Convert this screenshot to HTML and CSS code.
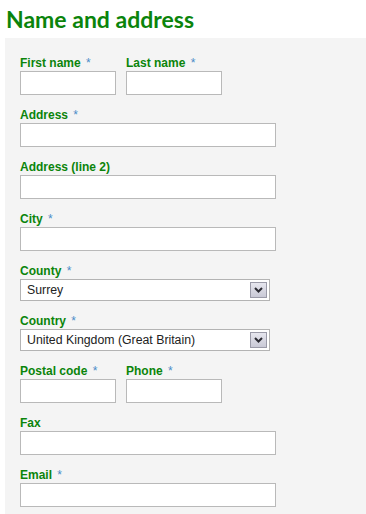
FILE: index.html
```html
<!DOCTYPE html>
<html lang="en">
<head>
    <meta charset="UTF-8">
    <meta name="viewport" content="width=device-width, initial-scale=1.0">
    <title>Name and address</title>
    <link rel="stylesheet" href="styles.css">
</head>
<body>

    <h1 class="page-title">Name and address</h1>

    <!-- Address form -->
    <form class="address-form">
        <div class="field-row">
            <div class="field">
                <label>First name <span class="req">*</span></label>
                <input type="text" class="input small">
            </div>
            <div class="field">
                <label>Last name <span class="req">*</span></label>
                <input type="text" class="input small">
            </div>
        </div>

        <div class="field">
            <label>Address <span class="req">*</span></label>
            <input type="text" class="input">
        </div>

        <div class="field">
            <label>Address (line 2)</label>
            <input type="text" class="input">
        </div>

        <div class="field">
            <label>City <span class="req">*</span></label>
            <input type="text" class="input">
        </div>

        <div class="field">
            <label>County <span class="req">*</span></label>
            <div class="select">
                <span class="select-value">Surrey</span>
                <span class="select-button">
                    <svg width="9" height="6" viewBox="0 0 9 6"><path d="M1 1 L4.5 4.5 L8 1" fill="none" stroke="#2b2b33" stroke-width="2"/></svg>
                </span>
            </div>
        </div>

        <div class="field">
            <label>Country <span class="req">*</span></label>
            <div class="select">
                <span class="select-value">United Kingdom (Great Britain)</span>
                <span class="select-button">
                    <svg width="9" height="6" viewBox="0 0 9 6"><path d="M1 1 L4.5 4.5 L8 1" fill="none" stroke="#2b2b33" stroke-width="2"/></svg>
                </span>
            </div>
        </div>

        <div class="field-row">
            <div class="field">
                <label>Postal code <span class="req">*</span></label>
                <input type="text" class="input small">
            </div>
            <div class="field">
                <label>Phone <span class="req">*</span></label>
                <input type="text" class="input small">
            </div>
        </div>

        <div class="field">
            <label>Fax</label>
            <input type="text" class="input">
        </div>

        <div class="field">
            <label>Email <span class="req">*</span></label>
            <input type="text" class="input">
        </div>
    </form>

</body>
</html>
```

FILE: styles.css
```css
body {
    margin: 0;
    font-family: "Liberation Sans", Arial, sans-serif;
    background-color: #fff;
}

.page-title {
    font-family: Lato, sans-serif;
    font-size: 23px;
    font-weight: bold;
    color: #0b840b;
    margin: 0;
    padding: 4px 0 0 6px;
    height: 34px;
    line-height: 30px;
}

.address-form {
    margin-left: 5px;
    background-color: #f4f4f4;
    padding: 18px 0 20px 15px;
}

.field-row {
    display: flex;
    gap: 10px;
}

.field {
    margin-bottom: 13px;
}

.field label {
    display: block;
    font-size: 12px;
    font-weight: bold;
    line-height: 14px;
    margin-bottom: 1px;
    color: #0b840b;
}

.req {
    font-weight: normal;
    color: #4a8cc8;
    margin-left: 2px;
}

.input {
    display: block;
    box-sizing: border-box;
    width: 256px;
    height: 24px;
    margin: 0;
    border: 1px solid #b9b9b9;
    background-color: #fff;
}

.input.small {
    width: 96px;
}

.select {
    box-sizing: border-box;
    width: 250px;
    height: 22px;
    border: 1px solid #b3b3b3;
    background-color: #fff;
    display: flex;
    align-items: center;
    justify-content: space-between;
    padding: 0 2px 0 6px;
    font-size: 12.3px;
    color: #222;
}

.select-button {
    box-sizing: border-box;
    width: 17px;
    height: 16px;
    border: 1px solid #9a9aa8;
    background: linear-gradient(#e6e6ee, #c9c9d6);
    display: flex;
    align-items: center;
    justify-content: center;
}
```
